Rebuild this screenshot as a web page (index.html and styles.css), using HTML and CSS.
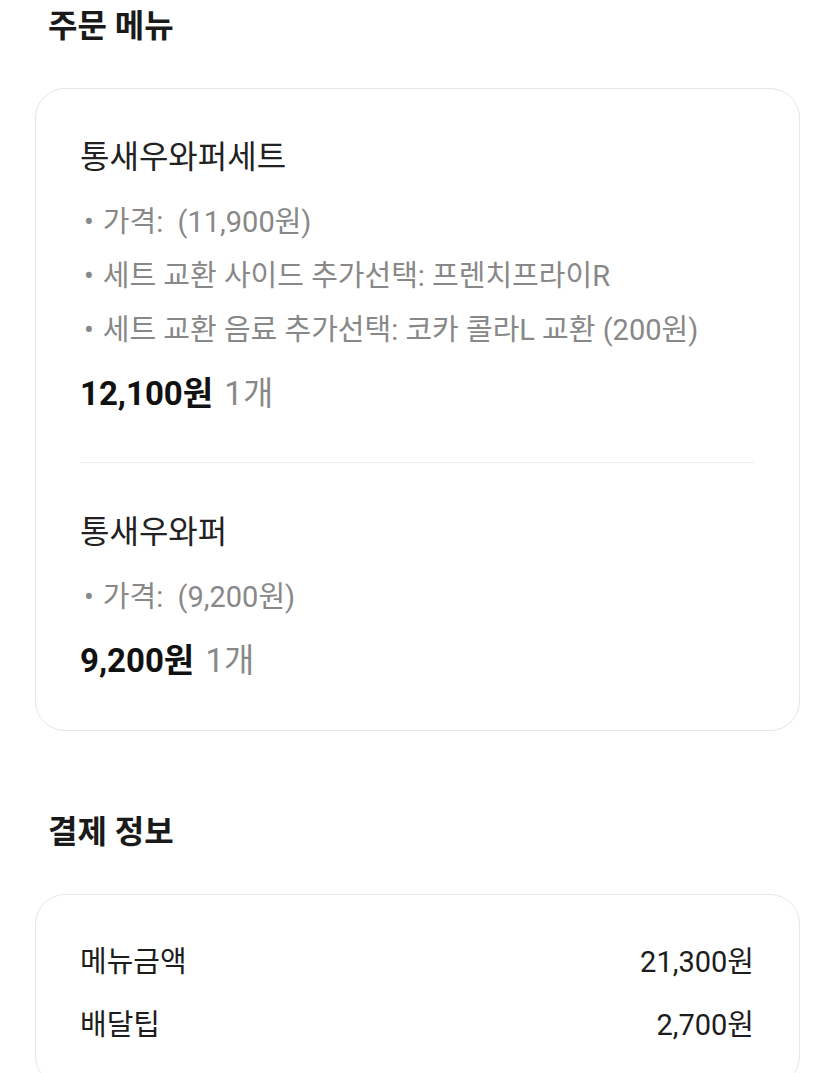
FILE: index.html
```html
<!DOCTYPE html>
<html lang="ko">
<head>
    <meta charset="UTF-8">
    <meta name="viewport" content="width=device-width, initial-scale=1.0">
    <title>주문 상세</title>
    <link rel="stylesheet" href="styles.css">
</head>
<body>

<section class="section section-menu">
    <h2 class="section-title">주문 메뉴</h2>
    <div class="card">
        <div class="order-item">
            <p class="item-name">통새우와퍼세트</p>
            <ul class="item-options">
                <li>가격:&nbsp; (11,900원)</li>
                <li>세트 교환 사이드 추가선택: 프렌치프라이R</li>
                <li>세트 교환 음료 추가선택: 코카 콜라L 교환 (200원)</li>
            </ul>
            <p class="item-price"><strong>12,100원</strong> <span class="qty">1개</span></p>
        </div>
        <div class="order-item">
            <p class="item-name">통새우와퍼</p>
            <ul class="item-options">
                <li>가격:&nbsp; (9,200원)</li>
            </ul>
            <p class="item-price"><strong>9,200원</strong> <span class="qty">1개</span></p>
        </div>
    </div>
</section>

<section class="section section-pay">
    <h2 class="section-title">결제 정보</h2>
    <div class="card card-pay">
        <div class="pay-row">
            <span>메뉴금액</span>
            <span>21,300원</span>
        </div>
        <div class="pay-row">
            <span>배달팁</span>
            <span>2,700원</span>
        </div>
    </div>
</section>

</body>
</html>
```

FILE: styles.css
```css
body {
    font-family: Roboto, "Noto Sans CJK KR", sans-serif;
    margin: 0;
    padding: 0 35px 0 35px;
    background-color: #fff;
    color: #1c1c1c;
}
.section-menu {
    padding-top: 7px;
}
.section-pay {
    margin-top: 82px;
}
.section-title {
    margin: 0 0 42px 13px;
    font-size: 32px;
    line-height: 39px;
    font-weight: 700;
    color: #1a1a1a;
}
.card {
    border: 1px solid #e6e6e6;
    border-radius: 30px;
    padding: 0 45px 0 44px;
}
.order-item {
    padding: 48px 0 49px;
}
.order-item:first-child {
    padding-bottom: 48px;
}
.order-item + .order-item {
    border-top: 1px solid #eeeeee;
    padding-top: 49px;
}
.item-name {
    margin: 0;
    font-size: 32px;
    line-height: 40px;
    color: #222;
}
.item-options {
    list-style: none;
    margin: 18px 0 0;
    padding: 0;
}
.item-options li {
    font-size: 29px;
    line-height: 54px;
    color: #888;
}
.item-options li::before {
    content: "•";
    margin: 0 9px 0 4px;
}
.item-price {
    margin: 17px 0 0;
    font-size: 33px;
    line-height: 40px;
}
.item-price strong {
    color: #111;
    font-weight: 700;
}
.qty {
    color: #888;
    margin-left: 3px;
}
.card-pay {
    padding-top: 47px;
    padding-bottom: 40px;
}
.pay-row {
    display: flex;
    justify-content: space-between;
    font-size: 29px;
    line-height: 40px;
    color: #1c1c1c;
}
.pay-row + .pay-row {
    margin-top: 23px;
}
```
